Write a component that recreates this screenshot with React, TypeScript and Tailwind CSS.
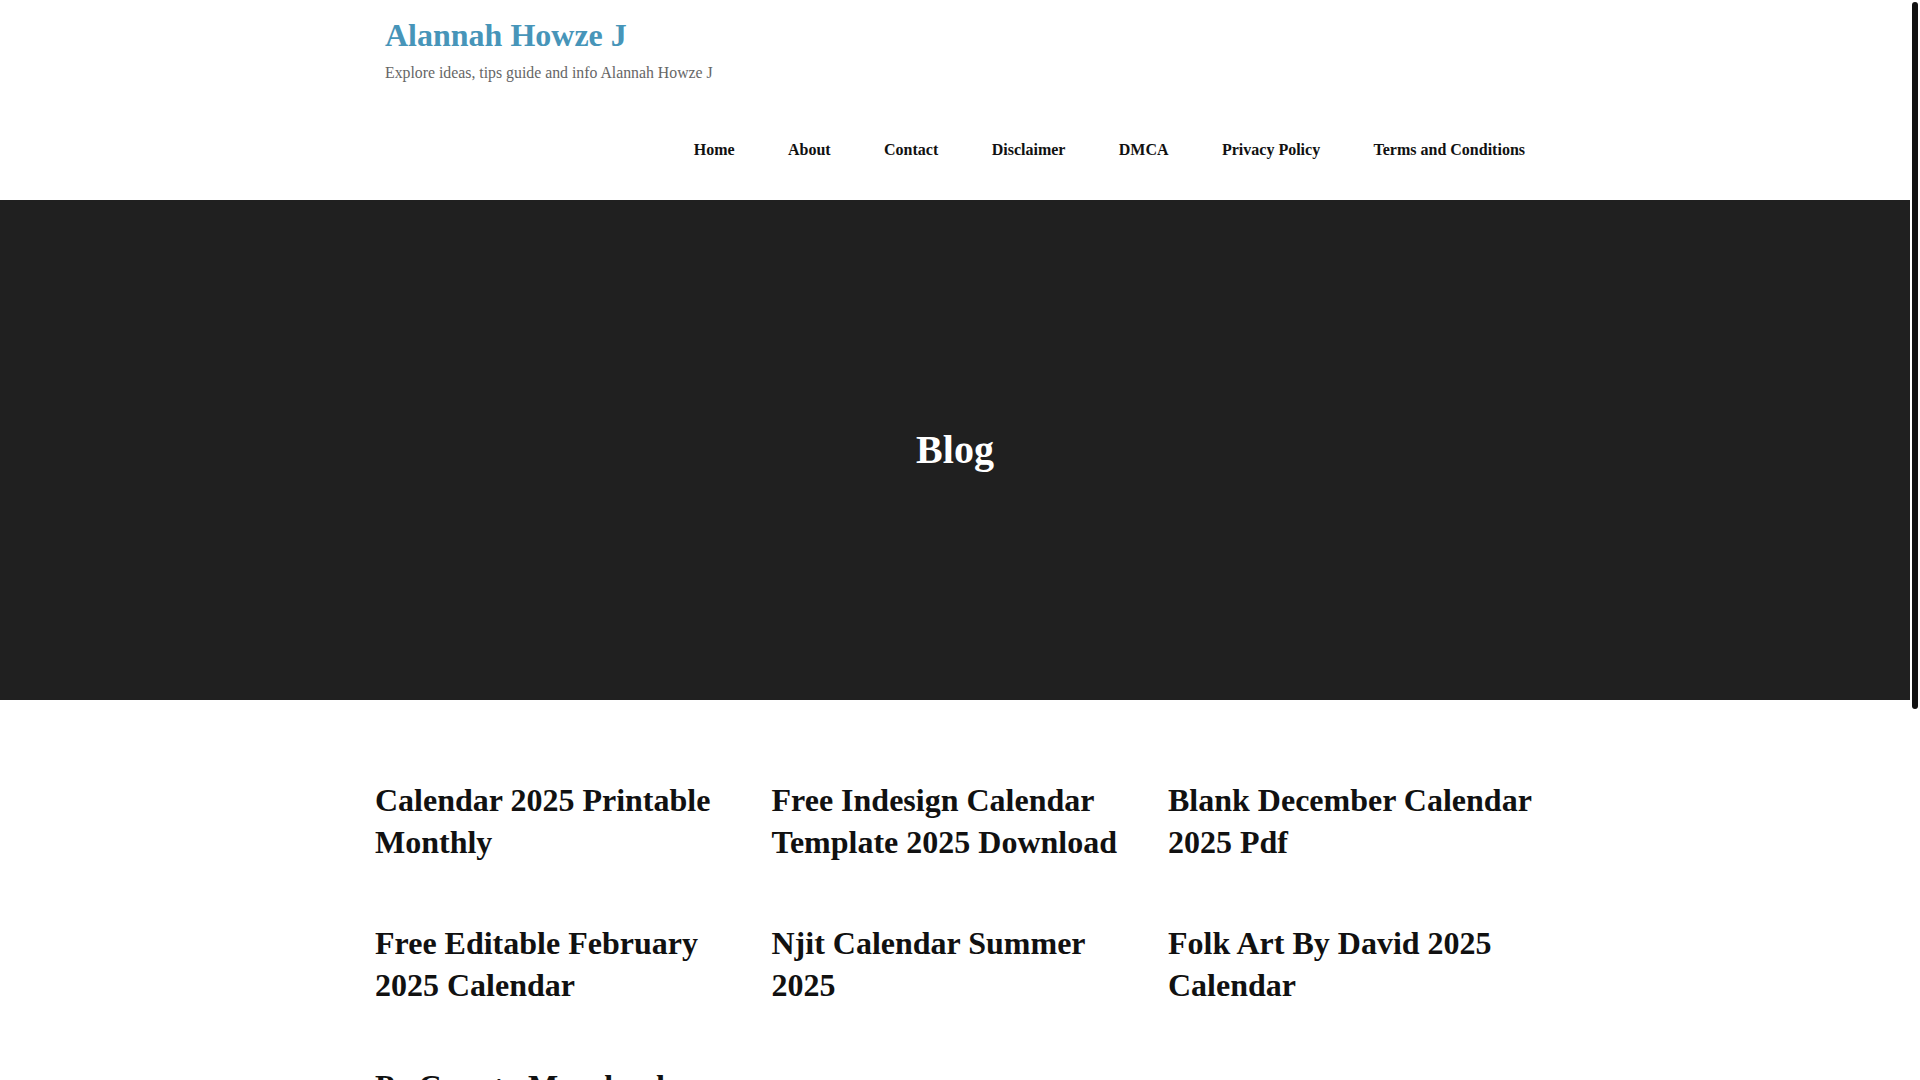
const navItems = [
  "Home",
  "About",
  "Contact",
  "Disclaimer",
  "DMCA",
  "Privacy Policy",
  "Terms and Conditions",
];

const posts = [
  "Calendar 2025 Printable Monthly",
  "Free Indesign Calendar Template 2025 Download",
  "Blank December Calendar 2025 Pdf",
  "Free Editable February 2025 Calendar",
  "Njit Calendar Summer 2025",
  "Folk Art By David 2025 Calendar",
  "Pg County Maryland Calendar 2025",
];

export default function App() {
  return (
    <div className="flex h-screen overflow-hidden bg-white font-['Liberation_Serif',serif]">
      <div className="h-full min-w-0 flex-1 overflow-hidden">
        <header className="h-[200px]">
          <div className="mx-auto w-[1170px] px-[15px] pt-[18px]">
            <a className="block text-[32px] font-bold leading-[1.1] text-[#4795b9]">
              Alannah Howze J
            </a>
            <p className="mt-[8px] text-[15.8px] leading-[24px] text-[#666]">
              Explore ideas, tips guide and info Alannah Howze J
            </p>
            <nav className="mt-[55px] flex justify-end gap-[53.4px]">
              {navItems.map((item) => (
                <a
                  key={item}
                  className="text-[16px] font-bold leading-[20px] text-[#111]"
                >
                  {item}
                </a>
              ))}
            </nav>
          </div>
        </header>

        <section className="flex h-[500px] items-center justify-center bg-[#202020]">
          <h1 className="text-[40px] font-bold leading-none text-white">Blog</h1>
        </section>

        <main className="mx-auto w-[1170px] pb-[440px] pl-[5px] pt-[79px]">
          <div className="grid grid-cols-[378px_378px_378px] gap-x-[18.5px] gap-y-[59px]">
            {posts.map((title) => (
              <h2
                key={title}
                className="text-[32px] font-bold leading-[42px] text-[#111]"
              >
                {title}
              </h2>
            ))}
          </div>
        </main>
      </div>

      {/* page scrollbar */}
      <div className="w-[10px] shrink-0 bg-white px-[2px] pt-[2px]">
        <div className="h-[707px] rounded-full bg-[#111]" />
      </div>
    </div>
  );
}
